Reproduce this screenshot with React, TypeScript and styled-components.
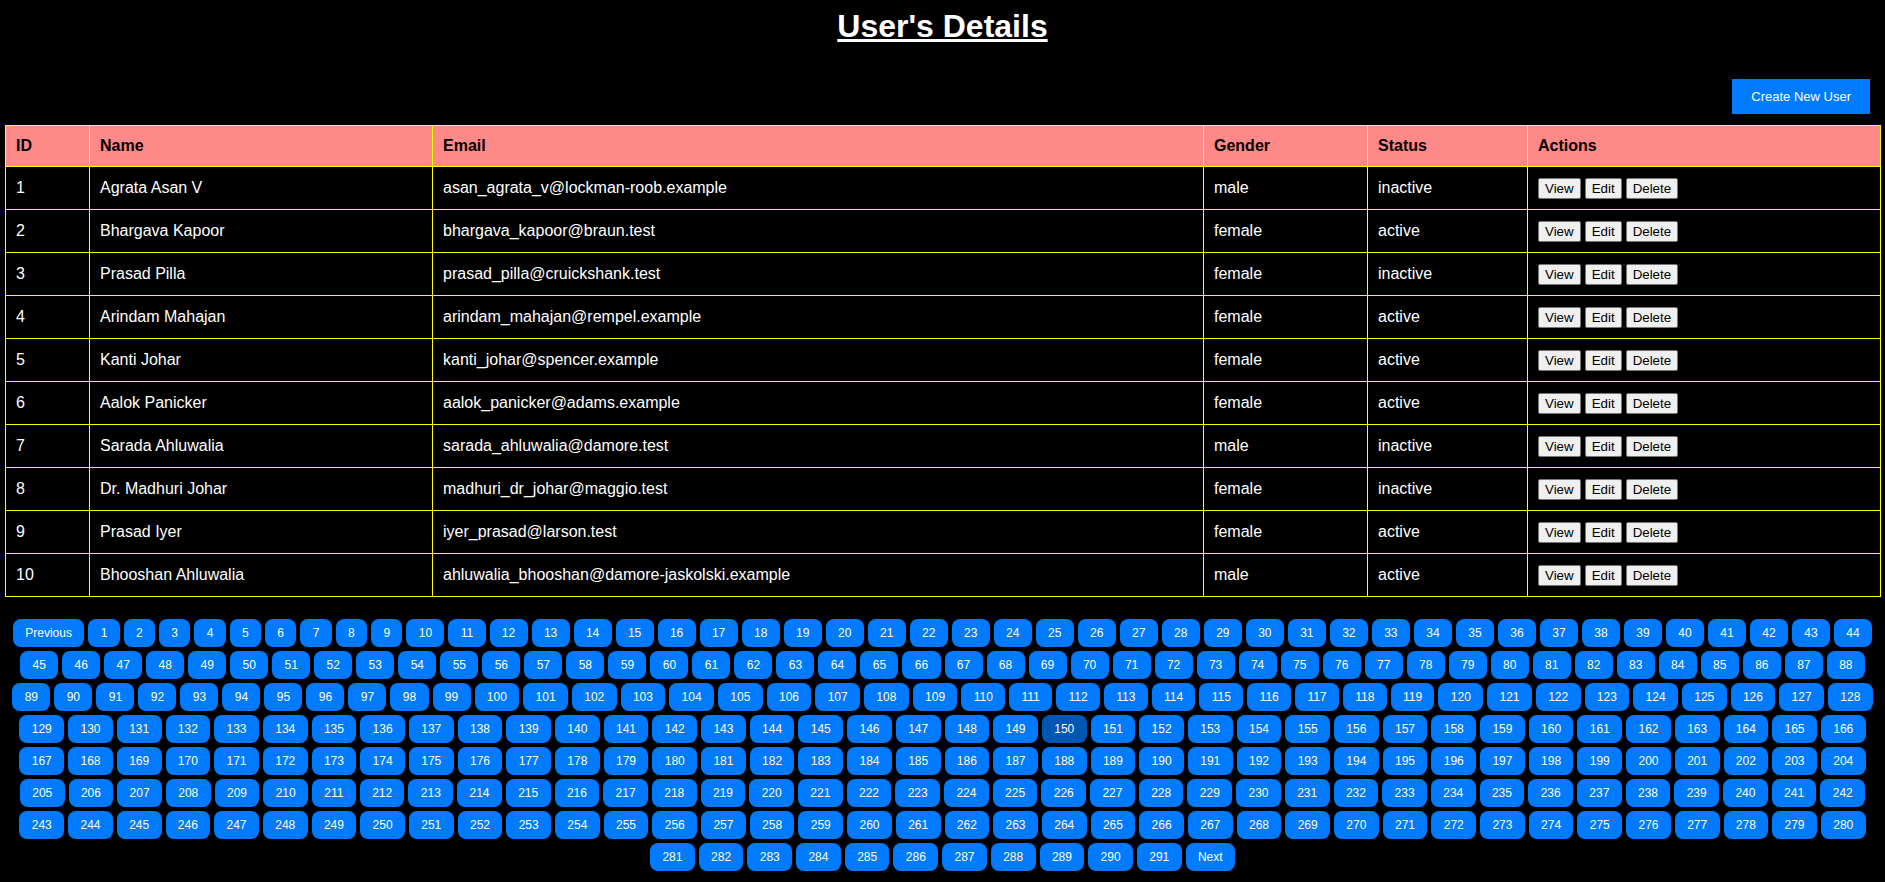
import React from "react";
import styled, { createGlobalStyle } from "styled-components";

const GlobalStyle = createGlobalStyle`
  html, body {
    margin: 0;
    padding: 0;
    background: #000;
  }
  body {
    font-family: "Liberation Sans", Arial, sans-serif;
    color: #fff;
  }
`;

const Page = styled.div`
  padding: 8px 5px 0;
  font-family: "Liberation Sans", Arial, sans-serif;
`;

const Title = styled.h1`
  margin: 0;
  text-align: center;
  font-size: 32px;
  font-weight: bold;
  line-height: 37px;
  text-decoration: underline;
  color: #fff;
`;

const Toolbar = styled.div`
  display: flex;
  justify-content: flex-end;
  margin-top: 34px;
  padding-right: 10px;
`;

const CreateButton = styled.button`
  background: #007bff;
  color: #fff;
  border: none;
  border-radius: 0;
  font-family: "Liberation Sans", Arial, sans-serif;
  font-size: 13px;
  line-height: 15px;
  padding: 10px 19px;
  cursor: pointer;
`;

const Table = styled.table`
  margin-top: 11px;
  width: 100%;
  border-collapse: collapse;
  table-layout: fixed;
`;

const HeadCell = styled.th`
  background: #ff8888;
  color: #000;
  border: 1px solid #ffff00;
  text-align: left;
  font-size: 16px;
  font-weight: bold;
  line-height: 20px;
  padding: 10px 10px;
`;

const Cell = styled.td`
  border: 1px solid #ffff00;
  color: #fff;
  font-size: 16px;
  line-height: 22px;
  padding: 10px 10px;
  white-space: nowrap;
`;

const Actions = styled.div`
  display: flex;
  align-items: center;
  gap: 4px;
`;

const ActionButton = styled.button`
  background: #efefef;
  color: #000;
  border: 1px solid #767676;
  border-radius: 2px;
  font-family: "Liberation Sans", Arial, sans-serif;
  font-size: 13.33px;
  line-height: 15px;
  padding: 2px 6px;
  cursor: pointer;
`;

const Pager = styled.div`
  display: flex;
  flex-wrap: wrap;
  justify-content: center;
  gap: 4px;
  margin-top: 22px;
  padding-bottom: 11px;
`;

const PageButton = styled.button<{ $active?: boolean }>`
  background: ${(p) => (p.$active ? "#0056b3" : "#007bff")};
  color: #fff;
  border: none;
  border-radius: 8px;
  font-family: "Liberation Sans", Arial, sans-serif;
  font-size: 12px;
  line-height: 14px;
  padding: 7px 12.33px;
  cursor: pointer;
`;

type User = {
  id: number;
  name: string;
  email: string;
  gender: string;
  status: string;
};

const users: User[] = [
  { id: 1, name: "Agrata Asan V", email: "asan_agrata_v@lockman-roob.example", gender: "male", status: "inactive" },
  { id: 2, name: "Bhargava Kapoor", email: "bhargava_kapoor@braun.test", gender: "female", status: "active" },
  { id: 3, name: "Prasad Pilla", email: "prasad_pilla@cruickshank.test", gender: "female", status: "inactive" },
  { id: 4, name: "Arindam Mahajan", email: "arindam_mahajan@rempel.example", gender: "female", status: "active" },
  { id: 5, name: "Kanti Johar", email: "kanti_johar@spencer.example", gender: "female", status: "active" },
  { id: 6, name: "Aalok Panicker", email: "aalok_panicker@adams.example", gender: "female", status: "active" },
  { id: 7, name: "Sarada Ahluwalia", email: "sarada_ahluwalia@damore.test", gender: "male", status: "inactive" },
  { id: 8, name: "Dr. Madhuri Johar", email: "madhuri_dr_johar@maggio.test", gender: "female", status: "inactive" },
  { id: 9, name: "Prasad Iyer", email: "iyer_prasad@larson.test", gender: "female", status: "active" },
  { id: 10, name: "Bhooshan Ahluwalia", email: "ahluwalia_bhooshan@damore-jaskolski.example", gender: "male", status: "active" },
];

const colWidths = [84, 343, 771, 164, 160, 353];
const headers = ["ID", "Name", "Email", "Gender", "Status", "Actions"];
const pages = Array.from({ length: 291 }, (_, i) => i + 1);

export default function App() {
  return (
    <Page>
      <GlobalStyle />
      <Title>User's Details</Title>
      <Toolbar>
        <CreateButton>Create New User</CreateButton>
      </Toolbar>
      <Table>
        <colgroup>
          {colWidths.map((w, i) => (
            <col key={i} style={{ width: w }} />
          ))}
        </colgroup>
        <thead>
          <tr>
            {headers.map((h) => (
              <HeadCell key={h}>{h}</HeadCell>
            ))}
          </tr>
        </thead>
        <tbody>
          {users.map((u) => (
            <tr key={u.id}>
              <Cell>{u.id}</Cell>
              <Cell>{u.name}</Cell>
              <Cell>{u.email}</Cell>
              <Cell>{u.gender}</Cell>
              <Cell>{u.status}</Cell>
              <Cell>
                <Actions>
                  <ActionButton>View</ActionButton>
                  <ActionButton>Edit</ActionButton>
                  <ActionButton>Delete</ActionButton>
                </Actions>
              </Cell>
            </tr>
          ))}
        </tbody>
      </Table>
      <Pager>
        <PageButton>Previous</PageButton>
        {pages.map((p) => (
          <PageButton key={p} $active={p === 150}>
            {p}
          </PageButton>
        ))}
        <PageButton>Next</PageButton>
      </Pager>
    </Page>
  );
}
